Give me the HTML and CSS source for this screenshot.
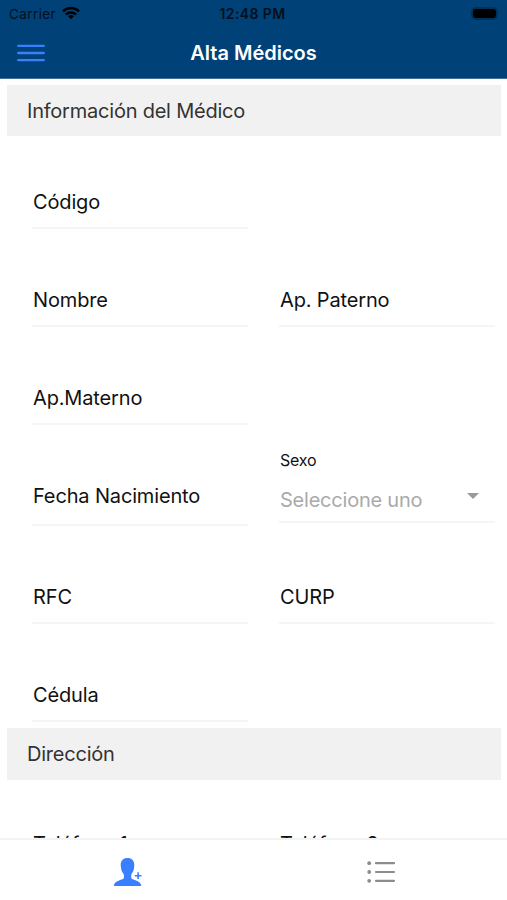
FILE: index.html
```html
<!DOCTYPE html>
<html lang="es">
<head>
<meta charset="utf-8">
<title>Alta Médicos</title>
<link rel="stylesheet" href="styles.css">
</head>
<body>
<div class="app">
  <header class="header">
    <div class="status">
      <div class="carrier"><span class="carrier-name">Carrier</span>
        <svg class="wifi" width="18" height="14" viewBox="0 0 18 14"><g fill="none" stroke="#000" stroke-width="2.5"><path d="M1 5.4C5.5 1 12.500 1 17 5.400"/><path d="M3.900 8.500C6.800 5.700 11.200 5.700 14.100 8.500"/></g><path d="M6.100 10.200Q9 7.800 11.900 10.200L9 13.200Z"/></svg>
      </div>
      <span class="clock">12:48 PM</span>
      <div class="battery"></div>
    </div>
    <div class="toolbar">
      <svg class="menu" width="28" height="18" viewBox="0 0 28 18" fill="none" stroke="#3880ff" stroke-width="2.3" stroke-linecap="round"><path d="M1.200 1.800h25.600M1.200 9h25.600M1.200 16.200h25.600"/></svg>
      <h1 class="title">Alta Médicos</h1>
    </div>
  </header>
  <main class="content">
    <h2 class="section first-section">Información del Médico</h2>
    <div class="row first"><div class="field"><span class="label">Código</span></div></div>
    <div class="row"><div class="field"><span class="label">Nombre</span></div><div class="field"><span class="label">Ap. Paterno</span></div></div>
    <div class="row"><div class="field"><span class="label">Ap.Materno</span></div></div>
    <div class="row date-row">
      <div class="field date"><span class="label">Fecha Nacimiento</span></div>
      <div class="field select"><span class="small">Sexo</span><div class="choice"><span>Seleccione uno</span><i class="caret"></i></div></div>
    </div>
    <div class="row"><div class="field"><span class="label">RFC</span></div><div class="field"><span class="label">CURP</span></div></div>
    <div class="row"><div class="field"><span class="label">Cédula</span></div></div>
    <h2 class="section second">Dirección</h2>
    <div class="row phones"><div class="field"><span class="label">Teléfono 1</span></div><div class="field"><span class="label">Teléfono 2</span></div></div>
  </main>
  <nav class="tabs">
    <div class="tab"><svg width="30" height="30" viewBox="0 0 30 30" fill="#3880ff"><path d="M14.500 1C18.800 1 21.400 3.700 21.300 8C21.200 11.500 20.600 14.500 18.500 17C18.100 18 18.100 20.500 18.500 21.500C19.500 23.300 27.700 23.100 28.300 29H.8C1.400 23.100 9.500 23.300 10.700 21.500C11.100 20.500 11 18 10.600 17C8.400 14.500 7.900 11.500 7.700 8C7.600 3.700 10.200 1 14.500 1Z"/><path d="M24.300 15.300h1.600v2.600H28.500v1.600h-2.600V22h-1.600v-2.500h-2.500v-1.600h2.500z"/></svg></div>
    <div class="tab list"><svg width="30" height="24" viewBox="0 0 30 24" fill="#8c8c8c"><circle cx="3.200" cy="3.200" r="1.900"/><circle cx="3.200" cy="12" r="1.900"/><circle cx="3.200" cy="20.800" r="1.900"/><path d="M10 2.100h18a1.100 1.100 0 0 1 0 2.200H10a1.100 1.100 0 0 1 0-2.200zM10 10.900h18a1.100 1.100 0 0 1 0 2.200H10a1.100 1.100 0 0 1 0-2.200zM10 19.700h18a1.100 1.100 0 0 1 0 2.200H10a1.100 1.100 0 0 1 0-2.200z"/></svg></div>
  </nav>
</div>
</body>
</html>
```
FILE: styles.css
```css
* { box-sizing: border-box; }
body { margin: 0; background: #fff; color: #111; font-family: Inter, Roboto, sans-serif; }
.app { height: 900px; display: flex; flex-direction: column; overflow: hidden; }
.header { flex: none; height: 79px; background: #004178; border-bottom: 1px solid #3f719b; }
.status { height: 27px; display: grid; grid-template-columns: 1fr auto 1fr; align-items: center; padding: 0 11px 0 9px; color: #03101c; }
.carrier { display: flex; align-items: center; gap: 6px; font-size: 13.5px; letter-spacing: .4px; }
.wifi { margin-top: -2px; }
.clock { font-size: 14px; font-weight: 600; letter-spacing: .4px; }
.battery { justify-self: end; width: 23px; height: 9px; border-radius: 3px; background: #000; box-shadow: 0 0 0 2px #00315a; }
.toolbar { height: 51px; display: grid; grid-template-columns: 1fr auto 1fr; align-items: center; padding: 0 17px; }
.menu { display: block; }
.title { margin: 0; color: #fff; font-size: 20px; font-weight: 600; letter-spacing: 0; }
.content { flex: 1; min-height: 0; overflow: hidden; padding: 6px 6px 0 7px; }
.section { margin: 0; height: 51px; padding-left: 20px; background: #f1f1f1; color: #333; font-size: 20px; font-weight: 400; line-height: 51px; letter-spacing: -.22px; }
.first-section { line-height: 53px; }
.row { display: grid; grid-template-columns: 216px 216px; column-gap: 31px; align-items: end; height: 98px; padding-left: 25px; }
.row.first { height: 93px; }
.date-row { height: 101px; }
.phones { height: 91px; }
.field { border-bottom: 2px solid #f5f5f5; padding: 0 1px 12px; font-size: 20px; line-height: 26px; letter-spacing: -.15px; white-space: nowrap; }
.label { display: block; }
.date { padding-bottom: 15px; }
.select { margin-bottom: 3px; padding-bottom: 8px; letter-spacing: -.22px; }
.small { display: block; font-size: 16px; line-height: 22px; margin-bottom: 16px; }
.choice { display: flex; justify-content: space-between; align-items: center; color: #aaa; }
.caret { border: 6px solid transparent; border-top-color: #999; border-bottom: 0; margin: -8px 15px 0 0; }
.second { margin-top: 6px; height: 52px; line-height: 52px; }
.tabs { flex: none; height: 62px; display: grid; grid-template-columns: 1fr 1fr; background: #fff; border-top: 2px solid #f3f3f3; }
.tab { display: flex; justify-content: center; align-items: center; padding: 3px 0 0 3px; }
.tab.list { padding-left: 1px; }
```
